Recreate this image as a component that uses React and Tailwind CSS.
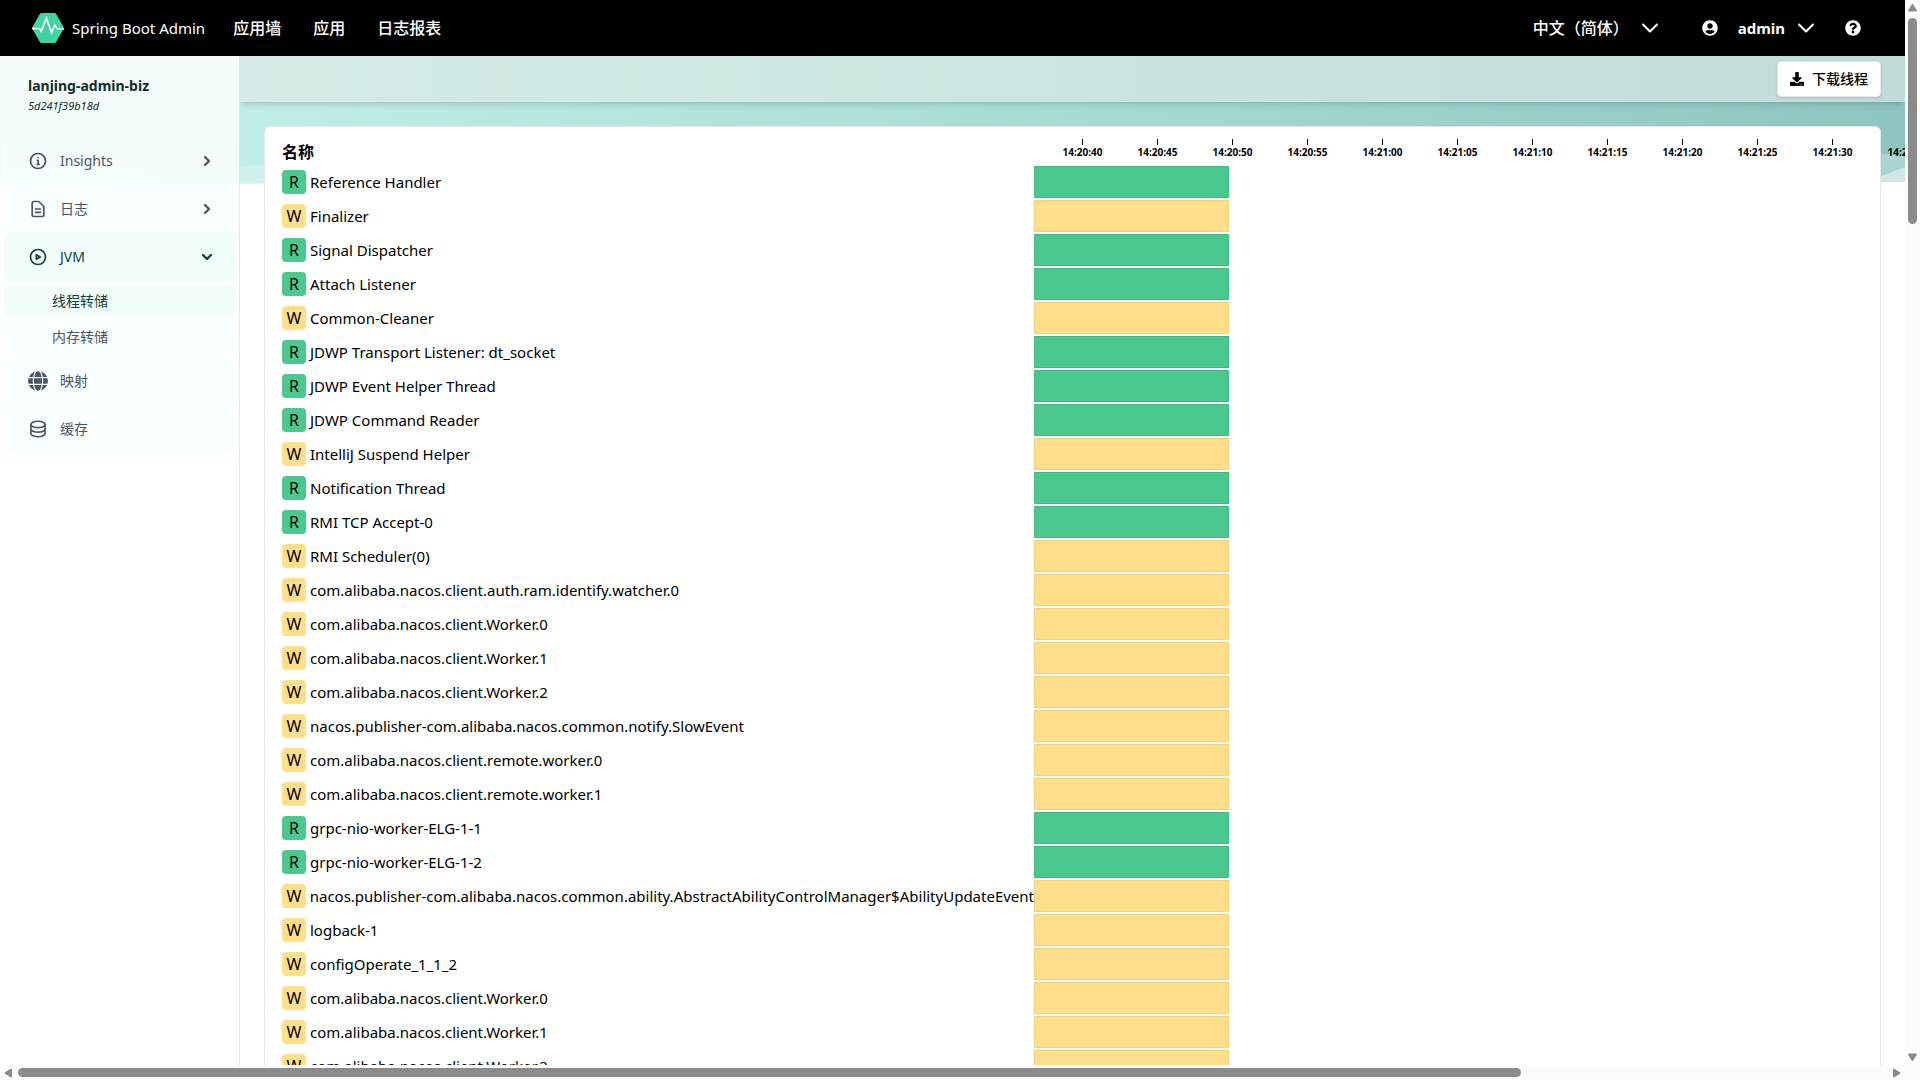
import clsx from 'clsx'
import { ChevronDown, ChevronRight } from 'lucide-react'
import { FaDownload, FaQuestionCircle, FaUserCircle } from 'react-icons/fa'

const navLinks = ['应用墙', '应用', '日志报表']

const ticks = [
  '14:20:40', '14:20:45', '14:20:50', '14:20:55', '14:21:00', '14:21:05',
  '14:21:10', '14:21:15', '14:21:20', '14:21:25', '14:21:30', '14:21:35',
]

const threads = [
  ['R', 'Reference Handler'],
  ['W', 'Finalizer'],
  ['R', 'Signal Dispatcher'],
  ['R', 'Attach Listener'],
  ['W', 'Common-Cleaner'],
  ['R', 'JDWP Transport Listener: dt_socket'],
  ['R', 'JDWP Event Helper Thread'],
  ['R', 'JDWP Command Reader'],
  ['W', 'IntelliJ Suspend Helper'],
  ['R', 'Notification Thread'],
  ['R', 'RMI TCP Accept-0'],
  ['W', 'RMI Scheduler(0)'],
  ['W', 'com.alibaba.nacos.client.auth.ram.identify.watcher.0'],
  ['W', 'com.alibaba.nacos.client.Worker.0'],
  ['W', 'com.alibaba.nacos.client.Worker.1'],
  ['W', 'com.alibaba.nacos.client.Worker.2'],
  ['W', 'nacos.publisher-com.alibaba.nacos.common.notify.SlowEvent'],
  ['W', 'com.alibaba.nacos.client.remote.worker.0'],
  ['W', 'com.alibaba.nacos.client.remote.worker.1'],
  ['R', 'grpc-nio-worker-ELG-1-1'],
  ['R', 'grpc-nio-worker-ELG-1-2'],
  ['W', 'nacos.publisher-com.alibaba.nacos.common.ability.AbstractAbilityControlManager$AbilityUpdateEvent'],
  ['W', 'logback-1'],
  ['W', 'configOperate_1_1_2'],
  ['W', 'com.alibaba.nacos.client.Worker.0'],
  ['W', 'com.alibaba.nacos.client.Worker.1'],
  ['W', 'com.alibaba.nacos.client.Worker.2'],
]

function Stroke({ children }) {
  return (
    <svg viewBox="0 0 24 24" className="size-5" fill="none" stroke="currentColor" strokeWidth="2" strokeLinecap="round" strokeLinejoin="round">
      {children}
    </svg>
  )
}

const icons = {
  info: <Stroke><circle cx="12" cy="12" r="9" /><path d="M11.2 11.3h1v4.6M10.9 16h2.6M12 7.9v.2" /></Stroke>,
  logs: <Stroke><path d="M9 12h6m-6 4h6m2 5H7a2 2 0 01-2-2V5a2 2 0 012-2h5.6a1 1 0 01.7.3l5.4 5.4a1 1 0 01.3.7V19a2 2 0 01-2 2z" /></Stroke>,
  jvm: <Stroke><circle cx="12" cy="12" r="9" /><path d="M10 9.2v5.6l4.6-2.8z" /></Stroke>,
  globe: (
    <svg viewBox="0 0 24 24" className="size-5">
      <circle cx="12" cy="12" r="12" fill="currentColor" />
      <g fill="none" stroke="#f7fffe" strokeWidth="1.4">
        <path d="M0 8h24M0 16h24" />
        <ellipse cx="12" cy="12" rx="5.6" ry="12.6" />
      </g>
    </svg>
  ),
  cache: <Stroke><ellipse cx="12" cy="6.5" rx="8.5" ry="3.8" /><path d="M3.5 6.5v11c0 2.1 3.8 3.8 8.5 3.8s8.5-1.7 8.5-3.8v-11M3.5 12c0 2.1 3.8 3.8 8.5 3.8s8.5-1.7 8.5-3.8" /></Stroke>,
}

function Logo() {
  return (
    <svg viewBox="0 0 32 30" className="h-[30px] w-8">
      <path d="M9.5 0h13a2 2 0 0 1 1.7 1L31.5 14a2 2 0 0 1 0 2l-7.3 13a2 2 0 0 1-1.7 1h-13a2 2 0 0 1-1.7-1L.5 16a2 2 0 0 1 0-2L7.8 1A2 2 0 0 1 9.5 0z" fill="#42d3a5" />
      <path d="M0 15.5h7.5l1.8 2.8L14.3 5l5.2 14.5 3.2-7.2 3 3.7H32" fill="none" stroke="#fff" strokeWidth="1.6" />
    </svg>
  )
}

function Navbar() {
  return (
    <header className="flex h-14 shrink-0 items-center bg-black px-8 text-base text-white">
      <a href="#" className="flex items-center gap-2">
        <Logo />
        <span className="text-[15px]">Spring Boot Admin</span>
      </a>
      <nav className="ml-7 flex gap-8 font-medium">
        {navLinks.map((label) => <a key={label} href="#">{label}</a>)}
      </nav>
      <div className="ml-auto flex items-center pr-3 font-medium">
        <button className="flex items-center gap-[7px]">中文（简体） <ChevronDown className="size-7" strokeWidth={1.8} /></button>
        <button className="ml-[38px] flex items-center text-[15px] font-bold">
          <FaUserCircle className="mr-5 size-4" /> admin <ChevronDown className="ml-[7px] size-7" strokeWidth={1.8} />
        </button>
        <a href="#" aria-label="help" className="ml-[25px]"><FaQuestionCircle className="size-4" /></a>
      </div>
    </header>
  )
}

function SideItem({ icon, label, arrow, active }) {
  const Arrow = arrow === 'down' ? ChevronDown : ChevronRight
  return (
    <a href="#" className={clsx('flex h-12 items-center rounded-md pr-5 pl-6', active ? 'bg-[#f0fdfa] text-[#134039]' : 'bg-[#f5fffd]/70 text-gray-600')}>
      {icons[icon]}
      <span className="ml-3">{label}</span>
      {arrow && <Arrow className="ml-auto size-4" strokeWidth={3.5} />}
    </a>
  )
}

function Sidebar() {
  return (
    <aside className="w-60 shrink-0 border-r border-gray-200 bg-white/80 px-1 text-sm">
      <div className="px-6 pt-5 pb-[21px] text-[#122f2a]">
        <div className="text-sm font-bold">lanjing-admin-biz</div>
        <div className="text-[11px] leading-5 italic">5d241f39b18d</div>
      </div>
      <nav>
        <SideItem icon="info" label="Insights" arrow="right" />
        <SideItem icon="logs" label="日志" arrow="right" />
        <SideItem icon="jvm" label="JVM" arrow="down" active />
        <a href="#" className="mt-1 flex h-8 items-center rounded-md bg-[#f0fdfa] pl-12 text-[#134039]">线程转储</a>
        <a href="#" className="my-1 flex h-8 items-center rounded-md bg-[#f8fffe] pl-12 text-gray-600">内存转储</a>
        <SideItem icon="globe" label="映射" />
        <SideItem icon="cache" label="缓存" />
      </nav>
    </aside>
  )
}

function Backdrop() {
  return (
    <svg className="absolute inset-x-0 top-0 h-32 w-full" viewBox="0 0 1905 128" preserveAspectRatio="none" aria-hidden="true">
      <defs>
        <linearGradient id="wave" x1="0" y1="0" x2="1" y2="0">
          <stop offset="0" stopColor="#c8f1ee" />
          <stop offset="0.5" stopColor="#aadfd8" />
          <stop offset="1" stopColor="#8dc6c0" />
        </linearGradient>
      </defs>
      <path d="M0 0h1905v126L0 128z" fill="url(#wave)" />
      <path d="M0 118C120 118 220 114 300 106L1700 80l205 20v28H0z" fill="#fff" opacity="0.25" />
      <path d="M1860 128l45-17v17z" fill="#fff" opacity="0.45" />
    </svg>
  )
}

function ThreadTable() {
  return (
    <div className="mx-6 mt-6 rounded-md border border-gray-200 bg-white px-[17px] pt-1">
      <table className="w-full table-fixed">
        <thead>
          <tr className="h-[34px]">
            <th className="w-[752px] pt-2 text-left align-middle">名称</th>
            <th className="pl-[11px] align-top">
              <div className="flex pt-2">
                {ticks.map((t) => (
                  <div key={t} className="flex w-[75px] shrink-0 flex-col items-center text-[10px] leading-[14px] font-bold">
                    <span className="h-1.5 w-px bg-black" />
                    {t}
                  </div>
                ))}
              </div>
            </th>
          </tr>
        </thead>
        <tbody>
          {threads.map(([state, name], i) => (
            <tr key={i} className="h-[34px]">
              <td className="whitespace-nowrap">
                <div className="flex items-center gap-1">
                  <span className={clsx('size-6 rounded text-center leading-6', state === 'R' ? 'bg-[#4ac88f]' : 'bg-[#ffdf89]')}>{state}</span>
                  <span className="text-[15px]">{name}</span>
                </div>
              </td>
              <td>
                <div className={clsx('h-8 w-[195px] border', state === 'R' ? 'border-[#43bb84] bg-[#4ac88f]' : 'border-[#efd07c] bg-[#ffdf89]')} />
              </td>
            </tr>
          ))}
        </tbody>
      </table>
    </div>
  )
}

function Arrow({ className }) {
  return (
    <svg viewBox="0 0 9 8" className={clsx('h-2 w-[9px] shrink-0', className)} fill="#8b8b8b">
      <path d="M3.7.5a1 1 0 0 1 1.6 0L8.7 6a1 1 0 0 1-.8 1.5H1.1A1 1 0 0 1 .3 6z" />
    </svg>
  )
}

export default function App() {
  return (
    <div className="flex h-screen flex-col overflow-hidden bg-white font-['Noto_Sans','Noto_Sans_CJK_SC',sans-serif] text-black">
      <div className="flex min-h-0 flex-1">
        <div className="flex min-w-0 flex-1 flex-col overflow-hidden">
          <Navbar />
          <div className="relative flex min-h-0 flex-1">
            <Backdrop />
            <div className="relative flex min-w-0 flex-1">
              <Sidebar />
              <main className="min-w-0 flex-1 overflow-hidden">
                <div className="flex h-[46px] items-center justify-end bg-[#e3ebe9]/60 px-6 shadow-md">
                  <button className="flex h-9 items-center gap-2 rounded border border-gray-200 bg-white px-3 text-sm font-medium shadow-sm">
                    <FaDownload className="size-3.5" /> 下载线程
                  </button>
                </div>
                <ThreadTable />
              </main>
            </div>
          </div>
        </div>
        <div className="flex w-[15px] flex-col items-center bg-[#fcfcfc] py-1">
          <Arrow />
          <div className="mt-1.5 h-[206px] w-[9px] rounded-full bg-[#8b8b8b]" />
          <Arrow className="mt-auto rotate-180" />
        </div>
      </div>
      <div className="flex h-[15px] items-center bg-[#fcfcfc] pr-[19px] pl-1">
        <Arrow className="-rotate-90" />
        <div className="ml-[5px] h-[9px] flex-[73] rounded-full bg-[#8b8b8b]" />
        <div className="flex-[18]" />
        <Arrow className="rotate-90" />
      </div>
    </div>
  )
}
